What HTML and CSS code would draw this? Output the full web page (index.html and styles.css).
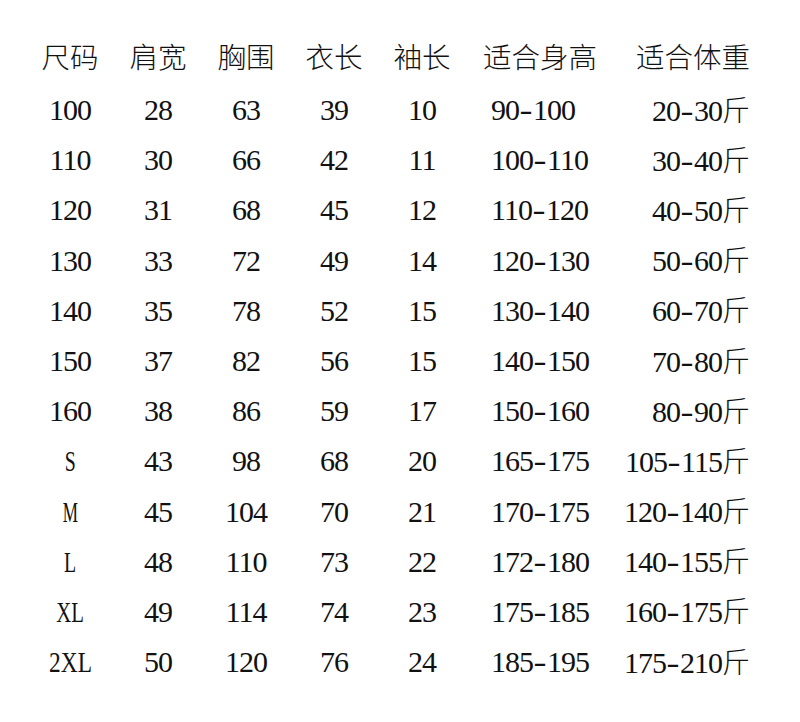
FILE: index.html
```html
<!DOCTYPE html>
<html lang="zh-CN">
<head>
<meta charset="utf-8">
<title>尺码表</title>
<link rel="stylesheet" href="styles.css">
</head>
<body>
<div class="chart">
  <div class="row head">
    <div class="c c1">尺码</div><div class="c c2">肩宽</div><div class="c c3">胸围</div><div class="c c4">衣长</div><div class="c c5">袖长</div><div class="c c6">适合身高</div><div class="c c7">适合体重</div>
  </div>
  <div class="row"><div class="c c1">100</div><div class="c c2">28</div><div class="c c3">63</div><div class="c c4">39</div><div class="c c5">10</div><div class="c c6">90<span class="d">-</span>100</div><div class="c c7">20<span class="d">-</span>30<span class="j">斤</span></div></div>
  <div class="row"><div class="c c1">110</div><div class="c c2">30</div><div class="c c3">66</div><div class="c c4">42</div><div class="c c5">11</div><div class="c c6">100<span class="d">-</span>110</div><div class="c c7">30<span class="d">-</span>40<span class="j">斤</span></div></div>
  <div class="row"><div class="c c1">120</div><div class="c c2">31</div><div class="c c3">68</div><div class="c c4">45</div><div class="c c5">12</div><div class="c c6">110<span class="d">-</span>120</div><div class="c c7">40<span class="d">-</span>50<span class="j">斤</span></div></div>
  <div class="row"><div class="c c1">130</div><div class="c c2">33</div><div class="c c3">72</div><div class="c c4">49</div><div class="c c5">14</div><div class="c c6">120<span class="d">-</span>130</div><div class="c c7">50<span class="d">-</span>60<span class="j">斤</span></div></div>
  <div class="row"><div class="c c1">140</div><div class="c c2">35</div><div class="c c3">78</div><div class="c c4">52</div><div class="c c5">15</div><div class="c c6">130<span class="d">-</span>140</div><div class="c c7">60<span class="d">-</span>70<span class="j">斤</span></div></div>
  <div class="row"><div class="c c1">150</div><div class="c c2">37</div><div class="c c3">82</div><div class="c c4">56</div><div class="c c5">15</div><div class="c c6">140<span class="d">-</span>150</div><div class="c c7">70<span class="d">-</span>80<span class="j">斤</span></div></div>
  <div class="row"><div class="c c1">160</div><div class="c c2">38</div><div class="c c3">86</div><div class="c c4">59</div><div class="c c5">17</div><div class="c c6">150<span class="d">-</span>160</div><div class="c c7">80<span class="d">-</span>90<span class="j">斤</span></div></div>
  <div class="row"><div class="c c1"><span class="lt">S</span></div><div class="c c2">43</div><div class="c c3">98</div><div class="c c4">68</div><div class="c c5">20</div><div class="c c6">165<span class="d">-</span>175</div><div class="c c7">105<span class="d">-</span>115<span class="j">斤</span></div></div>
  <div class="row"><div class="c c1"><span class="lt m">M</span></div><div class="c c2">45</div><div class="c c3">104</div><div class="c c4">70</div><div class="c c5">21</div><div class="c c6">170<span class="d">-</span>175</div><div class="c c7">120<span class="d">-</span>140<span class="j">斤</span></div></div>
  <div class="row"><div class="c c1"><span class="lt">L</span></div><div class="c c2">48</div><div class="c c3">110</div><div class="c c4">73</div><div class="c c5">22</div><div class="c c6">172<span class="d">-</span>180</div><div class="c c7">140<span class="d">-</span>155<span class="j">斤</span></div></div>
  <div class="row"><div class="c c1"><span class="lt x">XL</span></div><div class="c c2">49</div><div class="c c3">114</div><div class="c c4">74</div><div class="c c5">23</div><div class="c c6">175<span class="d">-</span>185</div><div class="c c7">160<span class="d">-</span>175<span class="j">斤</span></div></div>
  <div class="row"><div class="c c1"><span class="lt w">2XL</span></div><div class="c c2">50</div><div class="c c3">120</div><div class="c c4">76</div><div class="c c5">24</div><div class="c c6">185<span class="d">-</span>195</div><div class="c c7">175<span class="d">-</span>210<span class="j">斤</span></div></div>
</div>
</body>
</html>
```

FILE: styles.css
```css
html, body {
  margin: 0;
  padding: 0;
  background: #ffffff;
}
body {
  width: 800px;
  height: 722px;
  overflow: hidden;
  color: #111111;
  font-family: "Liberation Serif", "Noto Sans CJK SC", serif;
}
.chart {
  padding: 27px 0 0 26px;
}
.row {
  display: grid;
  grid-template-columns: 88px 88px 88px 88px 88px 149px 135px;
  height: 50.2px;
  align-items: center;
  font-size: 30px;
  letter-spacing: -1px;
  line-height: 1;
}
.head {
  height: 58px;
  font-family: "Noto Sans CJK SC", sans-serif;
  font-weight: 300;
  font-size: 28.5px;
  letter-spacing: 0;
}
.c {
  text-align: center;
  white-space: nowrap;
}
.c6 {
  text-align: left;
  padding-left: 25px;
}
.head .c6 {
  padding-left: 17px;
}
.c7 {
  text-align: right;
}
.d {
  display: inline-block;
  width: 14px;
  text-align: center;
  letter-spacing: 0;
  transform: scaleX(1.3);
}
.j {
  font-family: "Noto Sans CJK SC", sans-serif;
  font-weight: 300;
  font-size: 28px;
  letter-spacing: 0;
}
.lt {
  display: inline-block;
  letter-spacing: 0;
  transform: scaleX(0.66);
}
.lt.m {
  transform: scaleX(0.57);
}
.lt.x {
  transform: scaleX(0.69);
}
.lt.w {
  transform: scaleX(0.78);
}
```
